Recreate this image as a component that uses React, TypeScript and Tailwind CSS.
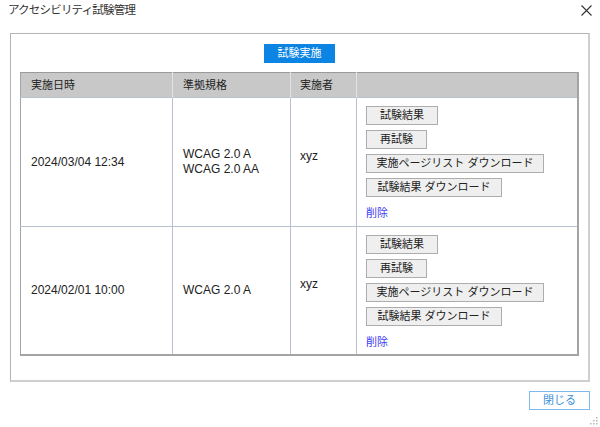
import React from "react";

const jp = "font-['Liberation_Sans','Noto_Sans_CJK_JP',sans-serif]";

type Row = { date: string; specs: string[]; user: string };

const rows: Row[] = [
  { date: "2024/03/04 12:34", specs: ["WCAG 2.0 A", "WCAG 2.0 AA"], user: "xyz" },
  { date: "2024/02/01 10:00", specs: ["WCAG 2.0 A"], user: "xyz" },
];

function GrayButton({ label, width }: { label: string; width: string }) {
  return (
    <button
      className={`${width} h-[19px] border border-[#adadad] bg-[#efefef] text-[11px] leading-none text-[#222] flex items-center justify-center whitespace-nowrap`}
    >
      {label}
    </button>
  );
}

function Actions() {
  return (
    <div className="flex flex-col items-start gap-[5px]">
      <GrayButton label="試験結果" width="w-[72px]" />
      <GrayButton label="再試験" width="w-[61px]" />
      <GrayButton label="実施ページリスト ダウンロード" width="w-[178px]" />
      <GrayButton label="試験結果 ダウンロード" width="w-[136px]" />
      <a className="mt-[2px] text-[11px] leading-[18px] text-[#3c3cf0] cursor-pointer">削除</a>
    </div>
  );
}

export default function App() {
  return (
    <div className={`relative w-[600px] h-[427px] bg-white text-[#222] ${jp}`}>
      {/* title bar */}
      <div className="flex h-[22px] items-center justify-between pl-[8px] pr-[8px]">
        <span className="text-[11.5px] tracking-[-0.8px] text-[#333]">アクセシビリティ試験管理</span>
        <svg width="11" height="11" viewBox="0 0 11 11" className="mt-[-2px]">
          <path d="M0.5 0.5 L10.5 10.5 M10.5 0.5 L0.5 10.5" stroke="#333" strokeWidth="1.1" />
        </svg>
      </div>

      {/* panel */}
      <div className="mx-[10px] mt-[11px] h-[349px] border-t border-l border-[#b4b4b4] border-r-2 border-b-2 border-r-[#cfcfcf] border-b-[#cfcfcf] px-[9px] pt-[10px]">
        <div className="flex justify-center">
          <button className="w-[71px] h-[19px] bg-[#0c84e4] text-white text-[11px] leading-none">
            試験実施
          </button>
        </div>

        <table className="mt-[9px] w-[559px] border-collapse table-fixed border-l border-[#a4a4a4] border-r-2 border-r-[#a4a4a4] border-b-2 border-b-[#a4a4a4]">
          <colgroup>
            <col className="w-[152px]" />
            <col className="w-[118px]" />
            <col className="w-[66px]" />
            <col />
          </colgroup>
          <thead>
            <tr className="h-[25px] bg-[#c8c8c8] border-t border-[#9a9a9a]">
              <th className="text-left font-normal text-[11px] pl-[10px] border-r border-[#e2e2e2]">実施日時</th>
              <th className="text-left font-normal text-[11px] pl-[10px] border-r border-[#e2e2e2]">準拠規格</th>
              <th className="text-left font-normal text-[11px] pl-[9px] border-r border-[#e2e2e2]">実施者</th>
              <th></th>
            </tr>
          </thead>
          <tbody>
            {rows.map((r, i) => (
              <tr key={i} className={`${i === 0 ? "h-[129px]" : "h-[128px]"} border-t border-[#b8c2cf]`}>
                <td className="pl-[10px] align-middle text-[12px] border-r border-[#b8c2cf]">{r.date}</td>
                <td className="pl-[10px] align-middle text-[12px] leading-[15px] border-r border-[#b8c2cf]">
                  {r.specs.map((s) => (
                    <div key={s}>{s}</div>
                  ))}
                </td>
                <td className="pl-[9px] align-middle text-[12px] border-r border-[#b8c2cf]">
                  <div className="pb-[13px]">{r.user}</div>
                </td>
                <td className="pl-[9px] pt-[8px] align-top">
                  <Actions />
                </td>
              </tr>
            ))}
          </tbody>
        </table>
      </div>

      {/* footer */}
      <div className="flex justify-end pr-[10px] mt-[9px]">
        <button className="w-[61px] h-[19px] border border-[#7fb8ea] bg-white text-[11px] leading-none text-[#3d8fd8]">
          閉じる
        </button>
      </div>

      {/* resize grip */}
      <svg width="9" height="9" viewBox="0 0 9 9" className="absolute right-[2px] bottom-[2px]">
        <rect x="7" y="1" width="1.5" height="1.5" fill="#b5b5b5" />
        <rect x="4" y="4" width="1.5" height="1.5" fill="#b5b5b5" />
        <rect x="7" y="4" width="1.5" height="1.5" fill="#b5b5b5" />
        <rect x="1" y="7" width="1.5" height="1.5" fill="#b5b5b5" />
        <rect x="4" y="7" width="1.5" height="1.5" fill="#b5b5b5" />
        <rect x="7" y="7" width="1.5" height="1.5" fill="#b5b5b5" />
      </svg>
    </div>
  );
}
